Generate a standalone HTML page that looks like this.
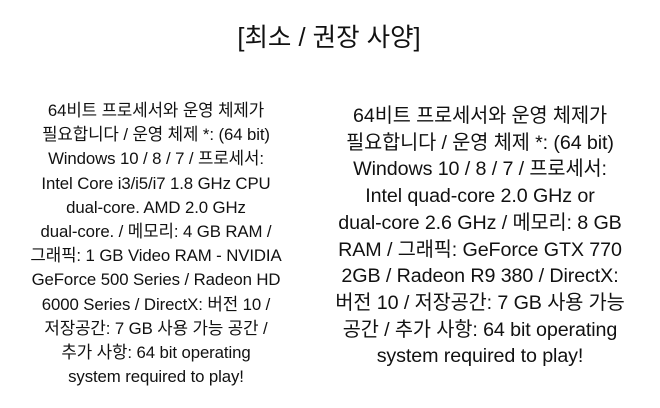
<!DOCTYPE html>
<html><head><meta charset="utf-8"><style>
html,body{margin:0;padding:0;background:#fff;}
body{width:660px;height:408px;position:relative;overflow:hidden;color:#111;font-family:"Liberation Sans","Noto Sans CJK KR",sans-serif;}
.t{position:absolute;top:21px;left:0;width:658px;text-align:center;font-size:25.5px;line-height:34px;}
.l{position:absolute;top:99px;left:0;width:312px;text-align:center;font-size:16.8px;line-height:24.2px;letter-spacing:-0.1px;}
.r{position:absolute;top:103px;left:320px;width:320px;text-align:center;font-size:19.7px;line-height:26.7px;letter-spacing:-0.1px;}
</style></head><body>
<div class="t">[최소 / 권장 사양]</div>
<div class="l">64비트 프로세서와 운영 체제가<br>필요합니다 / 운영 체제 *: (64 bit)<br>Windows 10 / 8 / 7 / 프로세서:<br>Intel Core i3/i5/i7 1.8 GHz CPU<br>dual-core. AMD 2.0 GHz<br>dual-core. / 메모리: 4 GB RAM /<br>그래픽: 1 GB Video RAM - NVIDIA<br>GeForce 500 Series / Radeon HD<br>6000 Series / DirectX: 버전 10 /<br>저장공간: 7 GB 사용 가능 공간 /<br>추가 사항: 64 bit operating<br>system required to play!</div>
<div class="r">64비트 프로세서와 운영 체제가<br>필요합니다 / 운영 체제 *: (64 bit)<br>Windows 10 / 8 / 7 / 프로세서:<br>Intel quad-core 2.0 GHz or<br>dual-core 2.6 GHz / 메모리: 8 GB<br>RAM / 그래픽: GeForce GTX 770<br>2GB / Radeon R9 380 / DirectX:<br>버전 10 / 저장공간: 7 GB 사용 가능<br>공간 / 추가 사항: 64 bit operating<br>system required to play!</div>
</body></html>
